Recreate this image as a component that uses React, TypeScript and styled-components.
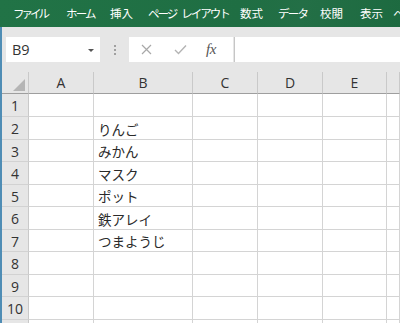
import React from 'react';
import styled, { createGlobalStyle } from 'styled-components';

const GlobalStyle = createGlobalStyle`
  html, body {
    margin: 0;
    padding: 0;
    overflow: hidden;
    background: #ffffff;
  }
  body {
    font-family: "Noto Sans CJK JP", "Noto Sans", sans-serif;
  }
`;

// label, slot width, letter spacing (kana in the original UI font is narrow)
const tabs: [string, number, number][] = [
  ['ファイル', 53, -3],
  ['ホーム', 44, -1.8],
  ['挿入', 38, 0],
  ['ページ レイアウト', 92, -2],
  ['数式', 38, 0],
  ['データ', 42, -1.8],
  ['校閲', 40, 0],
  ['表示', 33, 0],
  ['ヘ', 20, 0],
];
const columns = ['A', 'B', 'C', 'D', 'E', ''];
const colWidths = [27, 65, 99, 65, 65, 64];
const rowHeights = [23, 23, 22, 23, 22, 23, 22, 23, 22, 23, 22];
const cells: Record<number, string> = {
  2: 'りんご',
  3: 'みかん',
  4: 'マスク',
  5: 'ポット',
  6: '鉄アレイ',
  7: 'つまようじ',
};

const Window = styled.div`
  width: 400px;
  height: 323px;
  display: flex;
  flex-direction: column;
  overflow: hidden;
`;

const Ribbon = styled.div`
  height: 27px;
  flex: none;
  display: flex;
  align-items: center;
  padding-left: 13px;
  background: linear-gradient(100deg, #217346 0%, #1f6e43 60%, #236f46 75%, #1d6a40 100%);
  white-space: nowrap;
  overflow: hidden;
`;

const Tab = styled.span<{ $w: number; $ls: number }>`
  flex: none;
  display: flex;
  gap: 5px;
  width: ${p => p.$w}px;
  color: #ffffff;
  font-size: 11.5px;
  letter-spacing: ${p => p.$ls}px;
  line-height: 1;
`;

const Body = styled.div`
  flex: 1;
  display: flex;
  min-height: 0;
`;

const Stripe = styled.div`
  width: 2px;
  flex: none;
  background: #4f8db5;
`;

const Content = styled.div`
  flex: 1;
  display: flex;
  flex-direction: column;
  min-width: 0;
`;

const Toolbar = styled.div`
  height: 45px;
  flex: none;
  display: flex;
  align-items: flex-start;
  padding: 10px 0 0 4px;
  box-sizing: border-box;
  background: #e6e6e6;
`;

const NameBox = styled.div`
  width: 94px;
  height: 25px;
  box-sizing: border-box;
  background: #ffffff;
  display: flex;
  align-items: center;
  justify-content: space-between;
  padding: 0 6px 0 6px;
  font-family: "Open Sans", "Liberation Sans", sans-serif;
  font-size: 14.5px;
  color: #333333;
`;

const DropArrow = styled.span`
  width: 0;
  height: 0;
  border-left: 3px solid transparent;
  border-right: 3px solid transparent;
  border-top: 3px solid #555555;
  margin-top: 1px;
`;

const Grip = styled.div`
  width: 29px;
  height: 25px;
  display: flex;
  flex-direction: column;
  align-items: center;
  justify-content: center;
  gap: 2px;
`;

const Dot = styled.span`
  width: 2px;
  height: 2px;
  background: #a0a0a0;
`;

const FormulaButtons = styled.div`
  width: 104px;
  height: 25px;
  background: #ffffff;
  display: flex;
  align-items: center;
  position: relative;
`;

const IconSlot = styled.div<{ $left: number }>`
  position: absolute;
  left: ${p => p.$left}px;
  top: 0;
  height: 25px;
  display: flex;
  align-items: center;
`;

const Fx = styled.span`
  font-family: "Liberation Serif", serif;
  font-style: italic;
  font-size: 15px;
  color: #555555;
  letter-spacing: -0.5px;
`;

const FormulaInput = styled.div`
  flex: 1;
  height: 25px;
  margin-left: 1px;
  border-left: 1px solid #c6c6c6;
  background: #ffffff;
`;

const Sheet = styled.div`
  flex: 1;
  display: grid;
  grid-template-columns: ${colWidths.map(w => w + 'px').join(' ')} 1fr;
  grid-template-rows: 22px ${rowHeights.map(h => h + 'px').join(' ')};
  background: #ffffff;
`;

const Corner = styled.div`
  background: #e6e6e6;
  border-right: 1px solid #c9c9c9;
  border-bottom: 1px solid #9e9e9e;
  box-sizing: border-box;
  position: relative;
`;

const Triangle = styled.div`
  position: absolute;
  right: 3px;
  bottom: 2px;
  width: 0;
  height: 0;
  border-left: 12px solid transparent;
  border-bottom: 12px solid #b5b5b5;
`;

const ColHeader = styled.div`
  background: #e6e6e6;
  border-right: 1px solid #c9c9c9;
  border-bottom: 1px solid #9e9e9e;
  box-sizing: border-box;
  display: flex;
  align-items: center;
  justify-content: center;
  font-family: "Open Sans", "Liberation Sans", sans-serif;
  font-size: 14px;
  color: #333333;
`;

const RowHeader = styled.div`
  background: #e6e6e6;
  border-right: 1px solid #c9c9c9;
  border-bottom: 1px solid #d2d2d2;
  box-sizing: border-box;
  display: flex;
  align-items: center;
  justify-content: center;
  font-family: "Open Sans", "Liberation Sans", sans-serif;
  font-size: 14px;
  color: #333333;
  padding-top: 1px;
`;

const Cell = styled.div`
  border-right: 1px solid #d4d4d4;
  border-bottom: 1px solid #d4d4d4;
  box-sizing: border-box;
  display: flex;
  align-items: center;
  padding: 1px 0 0 4px;
  font-family: "Noto Sans CJK JP", sans-serif;
  font-size: 13.5px;
  color: #2a2a2a;
  white-space: nowrap;
  overflow: visible;
`;

const CrossIcon = () => (
  <svg width="11" height="11" viewBox="0 0 11 11">
    <path d="M1 1 L10 10 M10 1 L1 10" stroke="#a8a8a8" strokeWidth="1.2" fill="none" />
  </svg>
);

const CheckIcon = () => (
  <svg width="13" height="11" viewBox="0 0 13 11">
    <path d="M1 6 L4.5 9.5 L12 1.5" stroke="#b4b4b4" strokeWidth="1.4" fill="none" />
  </svg>
);

const App: React.FC = () => {
  return (
    <Window>
      <GlobalStyle />
      <Ribbon>
        {tabs.map(([t, w, ls]) => (
          <Tab key={t} $w={w} $ls={ls}>
            {t.split(' ').map(word => (
              <span key={word}>{word}</span>
            ))}
          </Tab>
        ))}
      </Ribbon>
      <Body>
        <Stripe />
        <Content>
          <Toolbar>
            <NameBox>
              B9
              <DropArrow />
            </NameBox>
            <Grip>
              <Dot />
              <Dot />
              <Dot />
            </Grip>
            <FormulaButtons>
              <IconSlot $left={12}>
                <CrossIcon />
              </IconSlot>
              <IconSlot $left={45}>
                <CheckIcon />
              </IconSlot>
              <IconSlot $left={77}>
                <Fx>fx</Fx>
              </IconSlot>
            </FormulaButtons>
            <FormulaInput />
          </Toolbar>
          <Sheet>
            <Corner>
              <Triangle />
            </Corner>
            {columns.map((c, i) => (
              <ColHeader key={'h' + i}>{c}</ColHeader>
            ))}
            {rowHeights.map((_, r) => (
              <React.Fragment key={r}>
                <RowHeader>{r + 1}</RowHeader>
                {columns.map((_, ci) => (
                  <Cell key={ci}>{ci === 1 ? cells[r + 1] : ''}</Cell>
                ))}
              </React.Fragment>
            ))}
          </Sheet>
        </Content>
      </Body>
    </Window>
  );
};

export default App;
